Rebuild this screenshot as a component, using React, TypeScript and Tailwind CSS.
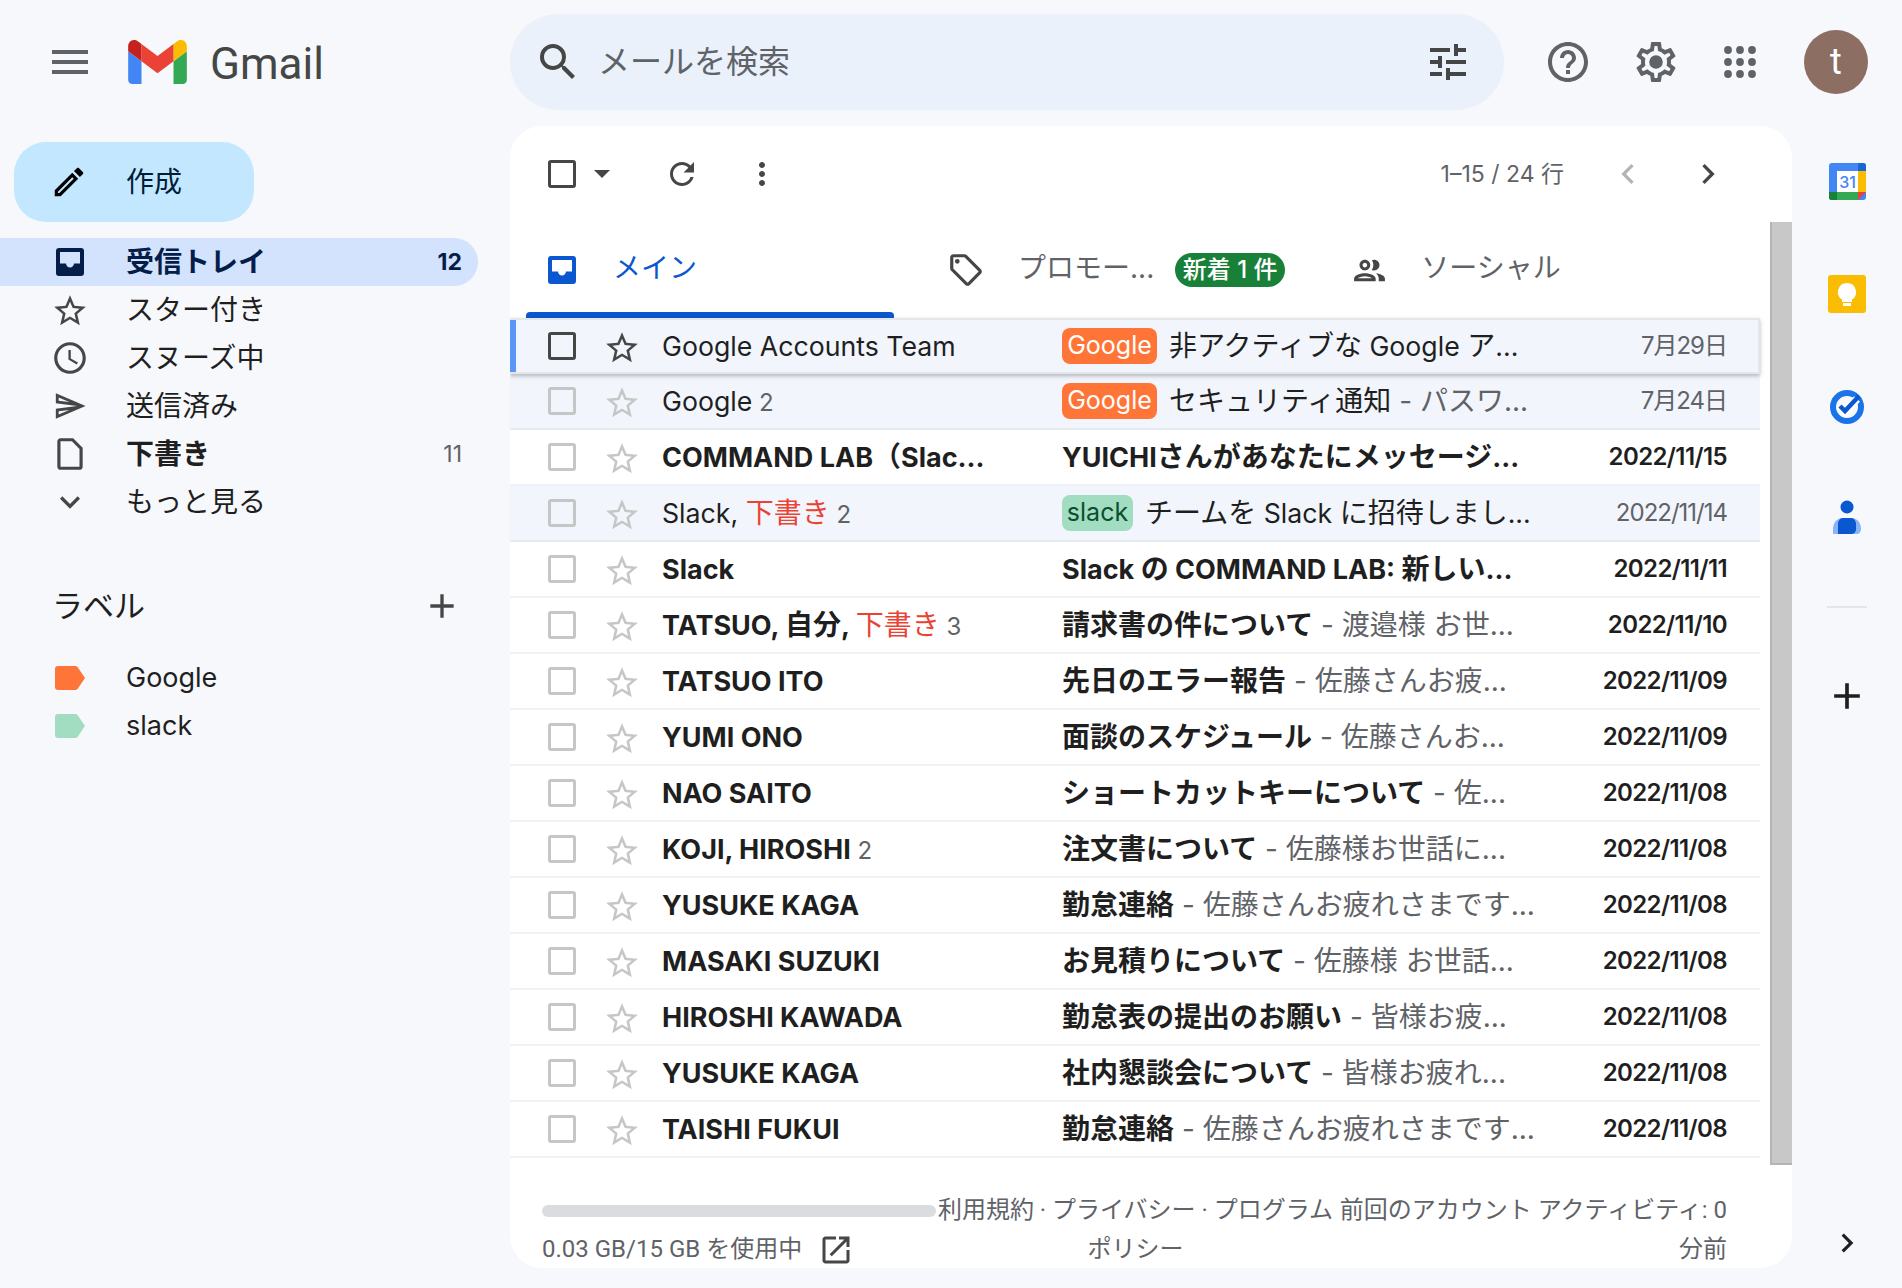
import type { ReactNode } from 'react';

const paths = {
  menu: 'M3 18h18v-2H3v2zm0-5h18v-2H3v2zm0-7v2h18V6H3z',
  search: 'M15.5 14h-.79l-.28-.27A6.471 6.471 0 0 0 16 9.5 6.5 6.5 0 1 0 9.5 16c1.61 0 3.09-.59 4.23-1.57l.27.28v.79l5 4.99L20.49 19l-4.99-5zm-6 0C7.01 14 5 11.99 5 9.5S7.01 5 9.5 5 14 7.01 14 9.5 11.99 14 9.5 14z',
  tune: 'M3 17v2h6v-2H3zM3 5v2h10V5H3zm10 16v-2h8v-2h-8v-2h-2v6h2zM7 9v2H3v2h4v2h2V9H7zm14 4v-2H11v2h10zm-6-4h2V7h4V5h-4V3h-2v6z',
  help: 'M11 18h2v-2h-2v2zm1-16C6.48 2 2 6.48 2 12s4.48 10 10 10 10-4.48 10-10S17.52 2 12 2zm0 18c-4.41 0-8-3.59-8-8s3.59-8 8-8 8 3.59 8 8-3.59 8-8 8zm0-14c-2.21 0-4 1.79-4 4h2c0-1.1.9-2 2-2s2 .9 2 2c0 2-3 1.75-3 5h2c0-2.25 3-2.5 3-5 0-2.21-1.79-4-4-4z',
  gear: 'M19.43 12.98c.04-.32.07-.64.07-.98 0-.34-.03-.66-.07-.98l2.11-1.65c.19-.15.24-.42.12-.64l-2-3.46c-.09-.16-.26-.25-.44-.25-.06 0-.12.01-.17.03l-2.49 1c-.52-.4-1.08-.73-1.69-.98l-.38-2.65C14.46 2.18 14.25 2 14 2h-4c-.25 0-.46.18-.49.42l-.38 2.65c-.61.25-1.17.59-1.69.98l-2.49-1c-.06-.02-.12-.03-.18-.03-.17 0-.34.09-.43.25l-2 3.46c-.13.22-.07.49.12.64l2.11 1.65c-.04.32-.07.65-.07.98 0 .33.03.66.07.98l-2.11 1.65c-.19.15-.24.42-.12.64l2 3.46c.09.16.26.25.44.25.06 0 .12-.01.17-.03l2.49-1c.52.4 1.08.73 1.69.98l.38 2.65c.03.24.24.42.49.42h4c.25 0 .46-.18.49-.42l.38-2.65c.61-.25 1.17-.59 1.69-.98l2.49 1c.06.02.12.03.18.03.17 0 .34-.09.43-.25l2-3.46c.12-.22.07-.49-.12-.64l-2.11-1.65zm-1.98-1.71c.04.31.05.52.05.73 0 .21-.02.43-.05.73l-.14 1.13.89.7 1.08.84-.7 1.21-1.27-.51-1.04-.42-.9.68c-.43.32-.84.56-1.25.73l-1.06.43-.16 1.13-.2 1.35h-1.4l-.19-1.35-.16-1.13-1.06-.43c-.43-.18-.83-.41-1.23-.71l-.91-.7-1.06.43-1.27.51-.7-1.21 1.08-.84.89-.7-.14-1.13c-.03-.31-.05-.54-.05-.74s.02-.43.05-.73l.14-1.13-.89-.7-1.08-.84.7-1.21 1.27.51 1.04.42.9-.68c.43-.32.84-.56 1.25-.73l1.06-.43.16-1.13.2-1.35h1.39l.19 1.35.16 1.13 1.06.43c.43.18.83.41 1.23.71l.91.7 1.06-.43 1.27-.51.7 1.21-1.07.85-.89.7.14 1.13zM12 8.6a3.4 3.4 0 1 0 0 6.8 3.4 3.4 0 0 0 0-6.8z',
  pencil: 'M14.06 9.02l.92.92L5.92 19H5v-.92l9.06-9.06M17.66 3c-.25 0-.51.1-.7.29l-1.83 1.83 3.75 3.75 1.83-1.83c.39-.39.39-1.02 0-1.41l-2.34-2.34c-.2-.2-.45-.29-.71-.29zm-3.6 3.19L3 17.25V21h3.75L17.81 9.94l-3.75-3.75z',
  star: 'M22 9.24l-7.19-.62L12 2 9.19 8.63 2 9.24l5.46 4.73L5.82 21 12 17.27 18.18 21l-1.63-7.03L22 9.24zM12 15.4l-3.76 2.27 1-4.28-3.32-2.88 4.38-.38L12 6.1l1.71 4.04 4.38.38-3.32 2.88 1 4.28L12 15.4z',
  clock: 'M11.99 2C6.47 2 2 6.48 2 12s4.47 10 9.99 10C17.52 22 22 17.52 22 12S17.52 2 11.99 2zM12 20c-4.42 0-8-3.58-8-8s3.58-8 8-8 8 3.58 8 8-3.58 8-8 8zm.5-13H11v6l5.25 3.15.75-1.23-4.5-2.67z',
  send: 'M4.01 6.03l7.51 3.22-7.52-1 .01-2.22m7.5 8.72L4 17.97v-2.22l7.51-1M2.01 3L2 10l15 2-15 2 .01 7L23 12 2.01 3z',
  draft: 'M14 2H6c-1.1 0-2 .9-2 2v16c0 1.1.9 2 2 2h12c1.1 0 2-.9 2-2V8l-6-6zM6 20V4h7.2L18 8.8V20H6z',
  chevronDown: 'M16.59 8.59L12 13.17 7.41 8.59 6 10l6 6 6-6z',
  plus: 'M19 13h-6v6h-2v-6H5v-2h6V5h2v6h6v2z',
  refresh: 'M17.65 6.35C16.2 4.9 14.21 4 12 4c-4.42 0-7.99 3.58-7.99 8s3.57 8 7.99 8c3.73 0 6.84-2.55 7.73-6h-2.08c-.82 2.33-3.04 4-5.65 4-3.31 0-6-2.69-6-6s2.69-6 6-6c1.66 0 3.14.69 4.22 1.78L13 11h7V4l-2.35 2.35z',
  more: 'M12 8c1.1 0 2-.9 2-2s-.9-2-2-2-2 .9-2 2 .9 2 2 2zm0 2c-1.1 0-2 .9-2 2s.9 2 2 2 2-.9 2-2-.9-2-2-2zm0 6c-1.1 0-2 .9-2 2s.9 2 2 2 2-.9 2-2-.9-2-2-2z',
  left: 'M15.41 7.41L14 6l-6 6 6 6 1.41-1.41L10.83 12z',
  right: 'M8.59 16.59L10 18l6-6-6-6-1.41 1.41L13.17 12z',
  tag: 'M21.41 11.58l-9-9C12.05 2.22 11.55 2 11 2H4c-1.1 0-2 .9-2 2v7c0 .55.22 1.05.59 1.42l9 9c.36.36.86.58 1.41.58s1.05-.22 1.41-.59l7-7c.37-.36.59-.86.59-1.41s-.23-1.06-.59-1.42zM13 20.01L4 11V4h7v-.01l9 9-7 7.02zM6.5 5a1.5 1.5 0 1 0 0 3 1.5 1.5 0 0 0 0-3z',
  people: 'M9 13.75c-2.34 0-7 1.17-7 3.5V19h14v-1.75c0-2.33-4.66-3.5-7-3.5zM4.34 17c.84-.58 2.87-1.25 4.66-1.25s3.82.67 4.66 1.25H4.34zM9 12c1.93 0 3.5-1.57 3.5-3.5S10.93 5 9 5 5.5 6.57 5.5 8.5 7.07 12 9 12zm0-5c.83 0 1.5.67 1.5 1.5S9.83 10 9 10s-1.5-.67-1.5-1.5S8.17 7 9 7zm7.04 6.81c1.16.84 1.96 1.96 1.96 3.44V19h4v-1.75c0-2.02-3.5-3.17-5.96-3.44zM15 12c1.93 0 3.5-1.57 3.5-3.5S16.93 5 15 5c-.54 0-1.04.13-1.5.35.63.89 1 1.98 1 3.15s-.37 2.26-1 3.15c.46.22.96.35 1.5.35z',
  open: 'M19 19H5V5h7V3H5c-1.11 0-2 .9-2 2v14c0 1.1.89 2 2 2h14c1.1 0 2-.9 2-2v-7h-2v7zM14 3v2h3.59l-9.83 9.83 1.41 1.41L19 6.41V10h2V3h-7z',
};

function Icon({ d, className }: { d: string; className: string }) {
  return (
    <svg viewBox="0 0 24 24" fill="currentColor" fillRule="evenodd" className={`shrink-0 ${className}`}>
      <path d={d} />
    </svg>
  );
}

function InboxIcon({ className, inner }: { className: string; inner?: string }) {
  return (
    <svg viewBox="0 0 28 28" className={`shrink-0 ${className}`}>
      {inner && <path d="M4 4h20v11.5h-6c0 2.2-1.8 4-4 4s-4-1.8-4-4H4z" fill={inner} />}
      <path
        fill="currentColor"
        fillRule="evenodd"
        d="M3 0h22a3 3 0 0 1 3 3v22a3 3 0 0 1-3 3H3a3 3 0 0 1-3-3V3a3 3 0 0 1 3-3zM4 4v11.5h6c0 2.2 1.8 4 4 4s4-1.8 4-4h6V4z"
      />
    </svg>
  );
}

function Checkbox({ dark }: { dark?: boolean }) {
  return (
    <div className={`w-[28px] h-[28px] shrink-0 rounded-[3px] border-[3px] ${dark ? 'border-[#444746]' : 'border-[#c4c7c5]'}`} />
  );
}

// latin runs sit a little smaller than the japanese ones in the mail list
function Mixed({ text, latin }: { text: string; latin: string }) {
  return (
    <>
      {text.split(/([\u3000-\u9fff\uff00-\uffef]+)/).map((part, i) =>
        i % 2 === 1 ? part : part && <span key={i} className={latin}>{part}</span>,
      )}
    </>
  );
}

function NavItem({ icon, label, count, active, bold }: { icon: ReactNode; label: string; count?: string; active?: boolean; bold?: boolean }) {
  return (
    <div className={`h-[48px] flex items-center pl-[46px] pr-[16px] rounded-r-full ${active ? 'bg-[#d3e3fd] text-[#041e49]' : 'text-[#444746]'}`}>
      <div className="w-[48px] shrink-0 flex justify-center">{icon}</div>
      <span className={`ml-[32px] flex-1 text-[28px] ${bold ? 'font-bold' : ''} ${active ? '' : 'text-[#1f1f1f]'}`}>{label}</span>
      {count && <span className={`text-[23px] ${active ? 'font-bold' : 'text-[#5f6368]'}`}>{count}</span>}
    </div>
  );
}

function LabelRow({ name, color }: { name: string; color: string }) {
  return (
    <div className="h-[48px] flex items-center pl-[55px]">
      <svg viewBox="0 0 30 24" className="w-[30px] h-[24px] shrink-0">
        <path fill={color} d="M3 0h17c1 0 2 .5 2.7 1.3L30 12l-7.3 10.7c-.7.8-1.7 1.3-2.7 1.3H3a3 3 0 0 1-3-3V3a3 3 0 0 1 3-3z" />
      </svg>
      <span className="ml-[41px] text-[27px] text-[#1f1f1f]">{name}</span>
    </div>
  );
}

type Row = {
  name: string;
  draft?: boolean;
  count?: string;
  label?: 'Google' | 'slack';
  subject: string;
  snippet?: string;
  date: string;
  read?: boolean;
  hover?: boolean;
};

const rows: Row[] = [
  { name: 'Google Accounts Team', label: 'Google', subject: '非アクティブな Google ア...', date: '7月29日', read: true, hover: true },
  { name: 'Google', count: '2', label: 'Google', subject: 'セキュリティ通知', snippet: ' - パスワ...', date: '7月24日', read: true },
  { name: 'COMMAND LAB（Slac...', subject: 'YUICHIさんがあなたにメッセージ...', date: '2022/11/15' },
  { name: 'Slack, ', draft: true, count: '2', label: 'slack', subject: 'チームを Slack に招待しまし...', date: '2022/11/14', read: true },
  { name: 'Slack', subject: 'Slack の COMMAND LAB: 新しい...', date: '2022/11/11' },
  { name: 'TATSUO, 自分, ', draft: true, count: '3', subject: '請求書の件について', snippet: ' - 渡邉様 お世...', date: '2022/11/10' },
  { name: 'TATSUO ITO', subject: '先日のエラー報告', snippet: ' - 佐藤さんお疲...', date: '2022/11/09' },
  { name: 'YUMI ONO', subject: '面談のスケジュール', snippet: ' - 佐藤さんお...', date: '2022/11/09' },
  { name: 'NAO SAITO', subject: 'ショートカットキーについて', snippet: ' - 佐...', date: '2022/11/08' },
  { name: 'KOJI, HIROSHI', count: '2', subject: '注文書について', snippet: ' - 佐藤様お世話に...', date: '2022/11/08' },
  { name: 'YUSUKE KAGA', subject: '勤怠連絡', snippet: ' - 佐藤さんお疲れさまです...', date: '2022/11/08' },
  { name: 'MASAKI SUZUKI', subject: 'お見積りについて', snippet: ' - 佐藤様 お世話...', date: '2022/11/08' },
  { name: 'HIROSHI KAWADA', subject: '勤怠表の提出のお願い', snippet: ' - 皆様お疲...', date: '2022/11/08' },
  { name: 'YUSUKE KAGA', subject: '社内懇談会について', snippet: ' - 皆様お疲れ...', date: '2022/11/08' },
  { name: 'TAISHI FUKUI', subject: '勤怠連絡', snippet: ' - 佐藤さんお疲れさまです...', date: '2022/11/08' },
];

function MailRow({ row }: { row: Row }) {
  const weight = row.read ? 'font-normal' : 'font-bold';
  const latin = row.read ? 'text-[26.7px]' : 'text-[27px]';
  return (
    <div
      className={`relative h-[56px] flex items-center pl-[38px] text-[28px] text-[#1f1f1f] whitespace-nowrap ${
        row.hover
          ? 'z-10 pr-[31px] bg-[#f2f6fc] border-2 border-l-0 border-[#e3e6ea] shadow-[0_2px_4px_rgba(60,64,67,0.35)]'
          : row.read
            ? 'pr-[33px] bg-[#f2f6fc] border-b-2 border-[#e6ebf2]'
            : 'pr-[33px] bg-white border-b-2 border-[#eef1f5]'
      }`}
    >
      {row.hover && <div className="absolute left-0 top-0 bottom-0 w-[6px] bg-[#5b95f5]" />}
      <Checkbox dark={row.hover} />
      <div className={`ml-[27px] mt-[3px] w-[38px] flex justify-center shrink-0 ${row.hover ? 'text-[#444746]' : 'text-[#c4c7c5]'}`}>
        <Icon d={paths.star} className="w-[38px] h-[38px]" />
      </div>
      <div className={`ml-[21px] w-[400px] shrink-0 whitespace-pre ${weight}`}>
        <Mixed text={row.name} latin={latin} />
        {row.draft && <span className="text-[#ea4335] font-normal">下書き</span>}
        {row.count && <span className="text-[24px] font-normal text-[#5f6368]"> {row.count}</span>}
      </div>
      <div className="flex-1 flex items-center min-w-0">
        {row.label && (
          <span
            className={`h-[36px] flex items-center justify-center rounded-[8px] text-[25px] mr-[12px] ${
              row.label === 'Google' ? 'w-[95px] bg-[#ff7537] text-white' : 'w-[71px] bg-[#a2dcc1] text-[#0b4f30]'
            }`}
          >
            {row.label}
          </span>
        )}
        <span className={`whitespace-pre ${weight}`}>
          <Mixed text={row.subject} latin={latin} />
        </span>
        {row.snippet && <span className="text-[#5f6368] whitespace-pre">{row.snippet}</span>}
      </div>
      <div className={`shrink-0 text-[24px] ${row.read ? 'tracking-[-1px] text-[#5f6368]' : 'tracking-[-0.6px] font-semibold'}`}>{row.date}</div>
    </div>
  );
}

export default function App() {
  return (
    <div className="w-[1902px] h-[1288px] overflow-hidden bg-[#f6f8fc] flex flex-col font-[Inter,'Noto_Sans_CJK_JP',sans-serif]">
      {/* Top bar */}
      <header className="h-[126px] shrink-0 flex items-start">
        <div className="w-[510px] shrink-0 h-[124px] flex items-center pl-[46px]">
          <Icon d={paths.menu} className="w-[48px] h-[48px] text-[#5f6368]" />
          <svg viewBox="52 42 88 66" className="ml-[34px] w-[59px] h-[44px] shrink-0">
            <path fill="#4285f4" d="M58 108h14V74L52 59v43c0 3.32 2.69 6 6 6" />
            <path fill="#34a853" d="M120 108h14c3.32 0 6-2.69 6-6V59l-20 15" />
            <path fill="#fbbc04" d="M120 48v26l20-15v-8c0-7.42-8.47-11.65-14.4-7.2" />
            <path fill="#ea4335" d="M72 74V48l24 18 24-18v26L96 92" />
            <path fill="#c5221f" d="M52 51v8l20 15V48l-5.6-4.2c-5.94-4.45-14.4-.22-14.4 7.2" />
          </svg>
          <span className="ml-[23px] pt-[3px] text-[44px] leading-none text-[#444746] font-[Roboto,sans-serif]">Gmail</span>
        </div>
        <div className="mt-[14px] w-[994px] h-[96px] rounded-[48px] bg-[#eaf1fb] flex items-center pl-[24px] pr-[32px] shrink-0">
          <Icon d={paths.search} className="w-[48px] h-[48px] text-[#444746]" />
          <span className="ml-[16px] flex-1 text-[32px] text-[#5f6368]">メールを検索</span>
          <Icon d={paths.tune} className="w-[48px] h-[48px] text-[#444746]" />
        </div>
        <div className="h-[124px] flex items-center text-[#5f6368]">
          <Icon d={paths.help} className="ml-[40px] w-[48px] h-[48px]" />
          <Icon d={paths.gear} className="ml-[40px] w-[48px] h-[48px]" />
          <svg viewBox="0 0 48 48" className="ml-[36px] w-[48px] h-[48px]" fill="currentColor">
            {[12, 24, 36].map((y) =>
              [12, 24, 36].map((x) => <circle key={`${x}-${y}`} cx={x} cy={y} r="3.9" />),
            )}
          </svg>
          <div className="ml-[40px] w-[64px] h-[64px] rounded-full bg-[#8d6e63] flex items-center justify-center text-white text-[36px] font-[Roboto,sans-serif]">t</div>
        </div>
      </header>

      <div className="flex-1 flex min-h-0 pb-[20px]">
        {/* Sidebar */}
        <aside className="w-[510px] shrink-0">
          <div className="mt-[16px] ml-[14px] w-[240px] h-[80px] rounded-[32px] bg-[#c2e7ff] flex items-center pl-[36px] text-[#001d35]">
            <Icon d={paths.pencil} className="w-[38px] h-[38px] text-black" />
            <span className="ml-[38px] text-[28px]">作成</span>
          </div>
          <nav className="mt-[16px] w-[478px]">
            <NavItem active bold label="受信トレイ" count="12" icon={<InboxIcon className="w-[28px] h-[28px]" />} />
            <NavItem label="スター付き" icon={<Icon d={paths.star} className="w-[38px] h-[38px] mt-[2px]" />} />
            <NavItem label="スヌーズ中" icon={<Icon d={paths.clock} className="w-[38px] h-[38px]" />} />
            <NavItem label="送信済み" icon={<Icon d={paths.send} className="w-[34px] h-[36px]" />} />
            <NavItem bold label="下書き" count="11" icon={<Icon d={paths.draft} className="w-[38px] h-[38px]" />} />
            <NavItem label="もっと見る" icon={<Icon d={paths.chevronDown} className="w-[40px] h-[40px]" />} />
          </nav>
          <div className="mt-[56px] h-[48px] w-[478px] flex items-center justify-between pl-[52px] pr-[16px]">
            <span className="text-[31px] text-[#1f1f1f]">ラベル</span>
            <Icon d={paths.plus} className="w-[40px] h-[40px] text-[#444746]" />
          </div>
          <div className="mt-[24px]">
            <LabelRow name="Google" color="#ff7537" />
            <LabelRow name="slack" color="#a2dcc1" />
          </div>
        </aside>

        {/* Main card */}
        <main className="w-[1282px] shrink-0 bg-white rounded-[32px] overflow-hidden flex flex-col">
          <div className="h-[96px] shrink-0 flex items-center pl-[38px] text-[#444746]">
            <Checkbox dark />
            <svg viewBox="0 0 16 8" className="ml-[18px] w-[16px] h-[8px]" fill="currentColor"><path d="M0 0h16L8 8z" /></svg>
            <Icon d={paths.refresh} className="ml-[54px] w-[36px] h-[36px]" />
            <Icon d={paths.more} className="ml-[44px] w-[36px] h-[36px]" />
            <span className="ml-auto text-[23px] text-[#5f6368]">1–15 / 24 行</span>
            <Icon d={paths.left} className="ml-[44px] w-[40px] h-[40px] text-[#b3b5b5]" />
            <Icon d={paths.right} className="ml-[40px] w-[40px] h-[40px]" />
            <div className="w-[64px] shrink-0" />
          </div>

          <div className="h-[943px] shrink-0 flex">
            <div className="w-[1250px] shrink-0">
              <div className="h-[96px] flex">
                <div className="relative w-[384px] shrink-0 flex items-center pl-[38px] text-[#0b57d0]">
                  <InboxIcon className="w-[28px] h-[28px]" inner="#ffffff" />
                  <span className="ml-[37px] mb-[4px] text-[28px]">メイン</span>
                  <div className="absolute left-[16px] right-0 bottom-0 h-[6px] rounded-t-[4px] bg-[#0b57d0]" />
                </div>
                <div className="flex items-center pl-[53px] text-[#444746]">
                  <Icon d={paths.tag} className="w-[38px] h-[38px]" />
                  <span className="ml-[33px] mb-[4px] text-[28px] text-[#5f6368]">プロモー...</span>
                  <span className="ml-[21px] h-[34px] w-[110px] rounded-full bg-[#188038] text-white text-[24px] font-medium flex items-center justify-center">新着 1 件</span>
                  <Icon d={paths.people} className="ml-[66px] w-[37px] h-[37px]" />
                  <span className="ml-[33px] mb-[4px] text-[28px] text-[#5f6368]">ソーシャル</span>
                </div>
              </div>
              {rows.map((row, i) => (
                <MailRow key={i} row={row} />
              ))}
            </div>
            <div className="ml-[10px] w-[22px] shrink-0 bg-[#c8c8c8] border-l-2 border-b-2 border-[#b4b4b4]" />
          </div>

          <div className="flex-1 flex pt-[26px] pl-[32px] pr-[65px] text-[24px] leading-[39px] text-[#5f6368] font-[Roboto,'Noto_Sans_CJK_JP',sans-serif]">
            <div className="w-[394px] shrink-0">
              <div className="h-[39px] flex items-center">
                <div className="w-full h-[12px] rounded-full bg-[#dadce0]" />
              </div>
              <div className="flex items-center">
                <span>0.03 GB/15 GB を使用中</span>
                <Icon d={paths.open} className="ml-[16px] w-[36px] h-[36px] text-[#444746]" />
              </div>
            </div>
            <div className="w-[399px] shrink-0 text-center">利用規約 · プライバシー · プログラム ポリシー</div>
            <div className="flex-1 text-right">前回のアカウント アクティビティ: 0 分前</div>
          </div>
        </main>

        {/* Right rail */}
        <aside className="flex-1 flex flex-col items-center pt-[37px] pb-[6px]">
          <svg viewBox="0 0 37 37" className="w-[37px] h-[37px] shrink-0">
            <rect width="37" height="37" rx="3" fill="#4285f4" />
            <path d="M29 0h5a3 3 0 0 1 3 3v5h-8z" fill="#1967d2" />
            <rect x="29" y="8" width="8" height="21" fill="#fbbc04" />
            <path d="M0 29h29v8H3a3 3 0 0 1-3-3z" fill="#34a853" />
            <path d="M0 29h8v8H3a3 3 0 0 1-3-3z" fill="#188038" />
            <path d="M29 29h8l-8 8z" fill="#ea4335" />
            <rect x="8" y="8" width="21" height="21" fill="#fff" />
            <text x="18.5" y="25" textAnchor="middle" fontSize="16" fontWeight="500" fill="#4285f4">31</text>
          </svg>
          <svg viewBox="0 0 38 38" className="mt-[75px] w-[38px] h-[38px] shrink-0">
            <rect width="38" height="38" rx="3" fill="#fbbc04" />
            <path d="M19 8a9 9 0 0 0-5 16.5V27h10v-2.5A9 9 0 0 0 19 8z" fill="#fff" />
            <rect x="15" y="28" width="8" height="3" fill="#fff" />
          </svg>
          <svg viewBox="0 0 36 36" className="mt-[75px] w-[36px] h-[36px] shrink-0">
            <circle cx="18" cy="19" r="14" fill="none" stroke="#1a73e8" strokeWidth="6" />
            <path d="M10 18l6 6 12-13" fill="none" stroke="#fff" strokeWidth="8" />
            <path d="M11 18l5 5 14-15" fill="none" stroke="#0b57d0" strokeWidth="4.5" />
          </svg>
          <svg viewBox="0 0 28 34" className="mt-[76px] w-[28px] h-[34px] shrink-0">
            <circle cx="14" cy="7" r="6.5" fill="#0b57d0" />
            <path d="M0 34v-5c0-6 4-11 9-11h10c5 0 9 5 9 11 0 3-2 5-4 5z" fill="#8ab4f8" />
            <path d="M5 34v-10c0-3 2-6 5-6h8c3 0 5 3 5 6v5c0 3-2 5-5 5z" fill="#0b57d0" />
          </svg>
          <div className="mt-[72px] w-[40px] h-[2px] bg-[#e3e5e8] shrink-0" />
          <Icon d={paths.plus} className="mt-[66px] w-[44px] h-[44px] text-[#1f1f1f]" />
          <Icon d={paths.right} className="mt-auto w-[38px] h-[38px] text-[#1f1f1f]" />
        </aside>
      </div>
    </div>
  );
}
